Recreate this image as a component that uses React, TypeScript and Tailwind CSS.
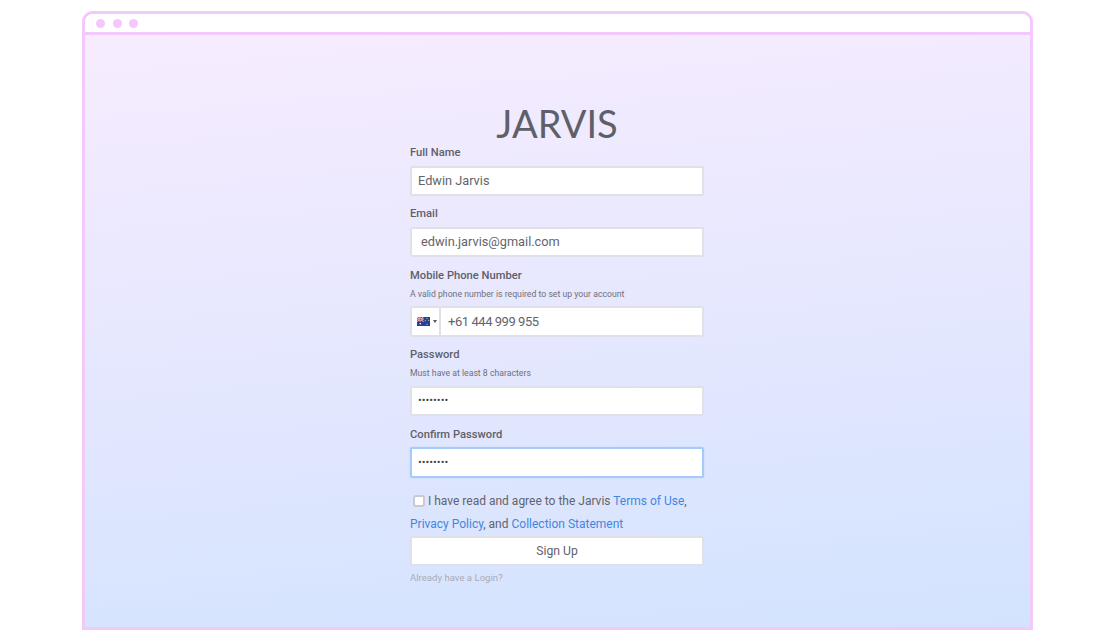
import React from 'react';

// ─── Small field helpers ────────────────────────────────────────────────────

function FieldLabel({ children }: { children: React.ReactNode }) {
  return <label className="block h-[14px] text-[11.2px] leading-[16px] font-medium text-[#5f5f69]">{children}</label>;
}

function Hint({ children }: { children: React.ReactNode }) {
  return <p className="h-[12px] text-[8.7px] leading-[12px] text-[#6f707b]">{children}</p>;
}

const inputClass = 'mt-[6.5px] block h-[30.5px] w-full rounded-[2px] border-2 bg-white px-[6px] outline-none';
const textInput = 'text-[12.75px] text-[#62636c]';
const passwordInput = 'text-[11.2px] text-[#44454d]';

function AuFlag() {
  return (
    <svg width="13" height="9" viewBox="0 0 26 18" className="block">
      <rect width="26" height="18" fill="#28408f" />
      <path d="M0 0L13 9M13 0L0 9" stroke="#fff" strokeWidth="2" />
      <path d="M0 0L13 9M13 0L0 9" stroke="#d8283c" strokeWidth="0.8" />
      <path d="M6.5 0V9M0 4.5H13" stroke="#fff" strokeWidth="3" />
      <path d="M6.5 0V9M0 4.5H13" stroke="#d8283c" strokeWidth="1.6" />
      <circle cx="6.5" cy="13.5" r="1.6" fill="#fff" />
      <circle cx="20" cy="3" r="1" fill="#fff" />
      <circle cx="16.5" cy="7.5" r="1" fill="#fff" />
      <circle cx="23.5" cy="6.5" r="1" fill="#fff" />
      <circle cx="20" cy="14.5" r="1" fill="#fff" />
    </svg>
  );
}

export default function App() {
  return (
    <div className="h-[641px] w-[1112px] overflow-hidden bg-white pl-[82px] pt-[11px] font-['Roboto',sans-serif]">
      <div className="flex h-[619px] w-[951px] flex-col overflow-hidden rounded-t-[11px] border-[3px] border-[#f3c8fb]">
        {/* Window bar */}
        <div className="flex h-[21px] shrink-0 items-center gap-[7.5px] border-b-[3px] border-[#f3c8fb] bg-white pl-[11px]">
          <span className="h-[9px] w-[9px] rounded-full bg-[#f3c8fb]" />
          <span className="h-[9px] w-[9px] rounded-full bg-[#f3c8fb]" />
          <span className="h-[9px] w-[9px] rounded-full bg-[#f3c8fb]" />
        </div>

        {/* Sign up form */}
        <div className="flex-1 bg-[linear-gradient(175deg,#f7ecfe,#d3e3fe)] pl-[325px] pt-[66px]">
          <div className="w-[294px]">
            <h1 className="h-[44px] text-center font-['Lato',sans-serif] text-[38px] leading-[45px] font-normal text-[#5f5f69]">
              JARVIS
            </h1>
            <div>
              <FieldLabel>Full Name</FieldLabel>
              <input readOnly value="Edwin Jarvis" className={`${inputClass} ${textInput} border-[#dfe0e8]`} />
            </div>
            <div className="mt-[10px]">
              <FieldLabel>Email</FieldLabel>
              <input readOnly value="edwin.jarvis@gmail.com" className={`${inputClass} ${textInput} border-[#dfe0e8] !pl-[9px]`} />
            </div>
            <div className="mt-[10.5px]">
              <FieldLabel>Mobile Phone Number</FieldLabel>
              <div className="mt-[6.5px]">
                <Hint>A valid phone number is required to set up your account</Hint>
              </div>
              <div className="mt-[6px] flex h-[30.5px] overflow-hidden rounded-[2px] border-2 border-[#dfe0e8] bg-white">
                <div className="flex w-[29px] shrink-0 items-center gap-[3px] border-r-2 border-[#dfe0e8] pl-[5px]">
                  <AuFlag />
                  <span className="h-0 w-0 border-x-[2.5px] border-t-[3px] border-x-transparent border-t-[#55565f]" />
                </div>
                <input
                  readOnly
                  value="+61 444 999 955"
                  className="min-w-0 flex-1 pl-[7px] text-[13px] tracking-[-0.45px] text-[#62636c] outline-none"
                />
              </div>
            </div>
            <div className="mt-[10.5px]">
              <FieldLabel>Password</FieldLabel>
              <div className="mt-[6px]">
                <Hint>Must have at least 8 characters</Hint>
              </div>
              <input readOnly type="password" value="password" className={`${inputClass} ${passwordInput} border-[#dfe0e8]`} />
            </div>
            <div className="mt-[10.5px]">
              <FieldLabel>Confirm Password</FieldLabel>
              <input
                readOnly
                type="password"
                value="password"
                className={`${inputClass} ${passwordInput} border-[#a6cbf9] shadow-[0_0_2px_#b9d6fb]`}
              />
            </div>

            <div className="mt-[12px] text-[12px] leading-[23px] text-[#62636c]">
              <div className="flex items-center">
                <span className="ml-[3px] mr-[3px] h-[12px] w-[12px] rounded-[3px] border-2 border-[#c9cad2] bg-white" />
                <span>
                  I have read and agree to the Jarvis <a className="text-[#4485e0]">Terms of Use</a>,
                </span>
              </div>
              <div>
                <a className="text-[#4485e0]">Privacy Policy</a>, and <a className="text-[#4485e0]">Collection Statement</a>
              </div>
            </div>

            <button className="block h-[30.5px] w-full rounded-[2px] border-2 border-[#dfe0e8] bg-white text-[12.2px] leading-[24px] text-[#62636c]">
              Sign Up
            </button>
            <p className="mt-[6px] text-[9.6px] leading-[12px] text-[#a9abb6]">Already have a Login?</p>
          </div>
        </div>
      </div>
    </div>
  );
}
